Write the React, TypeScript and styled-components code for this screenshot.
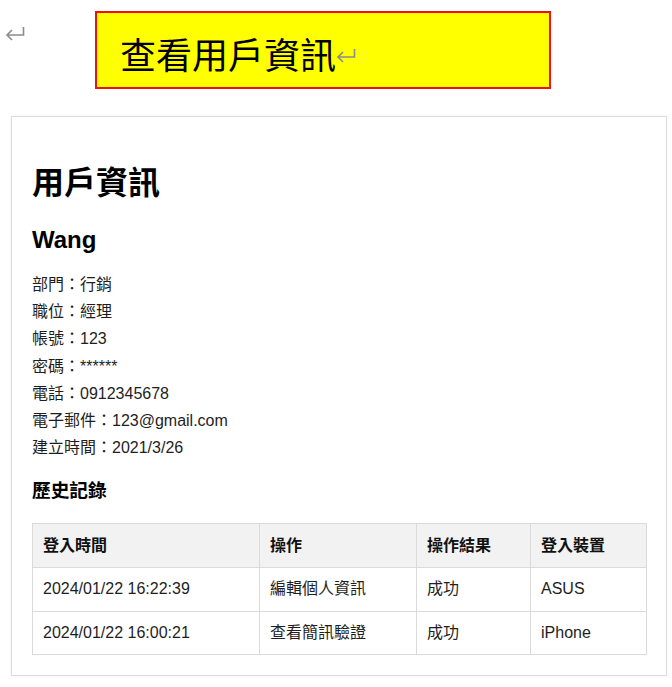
import React from "react";
import styled, { createGlobalStyle } from "styled-components";

const GlobalStyle = createGlobalStyle`
  html, body { margin: 0; padding: 0; background: #ffffff; }
  body {
    font-family: "Liberation Sans", Arial, "Noto Sans CJK TC", sans-serif;
    color: #222;
  }
`;

const Page = styled.div`
  width: 672px;
  min-height: 687px;
  display: flex;
  flex-direction: column;
`;

const TopBar = styled.div`
  display: flex;
  align-items: flex-start;
  padding-top: 11px;
`;

const LeftMarkWrap = styled.div`
  width: 95px;
  padding: 15px 0 0 5px;
  box-sizing: border-box;
  display: flex;
`;

const InlineMarkWrap = styled.span`
  display: inline-flex;
  margin: 4px 0 0 0;
`;

const TitleBox = styled.div`
  width: 456px;
  height: 78px;
  box-sizing: border-box;
  border: 2px solid #ee1111;
  background: #ffff00;
  display: flex;
  align-items: center;
  padding: 6px 0 0 23px;
`;

const TitleText = styled.span`
  font-family: "Noto Sans CJK TC", "Noto Sans CJK SC", serif;
  font-size: 36px;
  line-height: 40px;
  color: #000;
`;

const Card = styled.div`
  margin: 27px 0 0 11px;
  width: 656px;
  box-sizing: border-box;
  border: 1px solid #dcdcdc;
  box-shadow: 0 0 2px rgba(0, 0, 0, 0.08);
  padding: 20px 20px 20px 20px;
`;

const Title = styled.h1`
  margin: 26px 0 0;
  font-size: 32px;
  line-height: 40px;
  font-weight: bold;
  color: #000;
  font-family: "Liberation Sans", "Noto Sans CJK TC", sans-serif;
`;

const Name = styled.h2`
  margin: 22px 0 0;
  font-size: 24px;
  line-height: 30px;
  font-weight: bold;
  color: #000;
`;

const InfoList = styled.div`
  margin-top: 16px;
  display: flex;
  flex-direction: column;
`;

const InfoLine = styled.div`
  font-size: 16px;
  line-height: 27.2px;
  color: #1e1e1e;
`;

const Section = styled.h3`
  margin: 17px 0 0;
  font-size: 18.7px;
  line-height: 26px;
  font-weight: bold;
  color: #000;
`;

const Table = styled.table`
  margin-top: 19px;
  width: 614px;
  border-collapse: collapse;
  table-layout: fixed;
`;

const Th = styled.th<{ $w: number }>`
  width: ${(p) => p.$w}px;
  box-sizing: border-box;
  text-align: left;
  background: #f2f2f2;
  border: 1px solid #dadada;
  padding: 10px 10px;
  line-height: 23px;
  font-size: 16px;
  font-weight: bold;
  color: #111;
`;

const Td = styled.td`
  border: 1px solid #dadada;
  padding: 10px 10px;
  line-height: 22.5px;
  font-size: 16px;
  color: #1e1e1e;
`;

function ReturnMark({ w, h }: { w: number; h: number }) {
  return (
    <svg width={w} height={h} viewBox="0 0 20 15" fill="none">
      <path
        d="M18.5 1 V9 H2 M7 4 L2 9 L7 14"
        stroke="#8c8c8c"
        strokeWidth="1.6"
        strokeLinejoin="miter"
      />
    </svg>
  );
}

const info = [
  "部門：行銷",
  "職位：經理",
  "帳號：123",
  "密碼：******",
  "電話：0912345678",
  "電子郵件：123@gmail.com",
  "建立時間：2021/3/26",
];

const columns: [string, number][] = [
  ["登入時間", 227],
  ["操作", 157],
  ["操作結果", 114],
  ["登入裝置", 116],
];

const rows = [
  ["2024/01/22 16:22:39", "編輯個人資訊", "成功", "ASUS"],
  ["2024/01/22 16:00:21", "查看簡訊驗證", "成功", "iPhone"],
];

export default function App() {
  return (
    <Page lang="zh-Hant-TW">
      <GlobalStyle />
      <TopBar>
        <LeftMarkWrap>
          <ReturnMark w={20} h={15} />
        </LeftMarkWrap>
        <TitleBox>
          <TitleText>查看用戶資訊</TitleText>
          <InlineMarkWrap>
            <ReturnMark w={20} h={15} />
          </InlineMarkWrap>
        </TitleBox>
      </TopBar>
      <Card>
        <Title>用戶資訊</Title>
        <Name>Wang</Name>
        <InfoList>
          {info.map((t) => (
            <InfoLine key={t}>{t}</InfoLine>
          ))}
        </InfoList>
        <Section>歷史記錄</Section>
        <Table>
          <thead>
            <tr>
              {columns.map(([c, w]) => (
                <Th key={c} $w={w}>
                  {c}
                </Th>
              ))}
            </tr>
          </thead>
          <tbody>
            {rows.map((r) => (
              <tr key={r[0]}>
                {r.map((c, i) => (
                  <Td key={i}>{c}</Td>
                ))}
              </tr>
            ))}
          </tbody>
        </Table>
      </Card>
    </Page>
  );
}
